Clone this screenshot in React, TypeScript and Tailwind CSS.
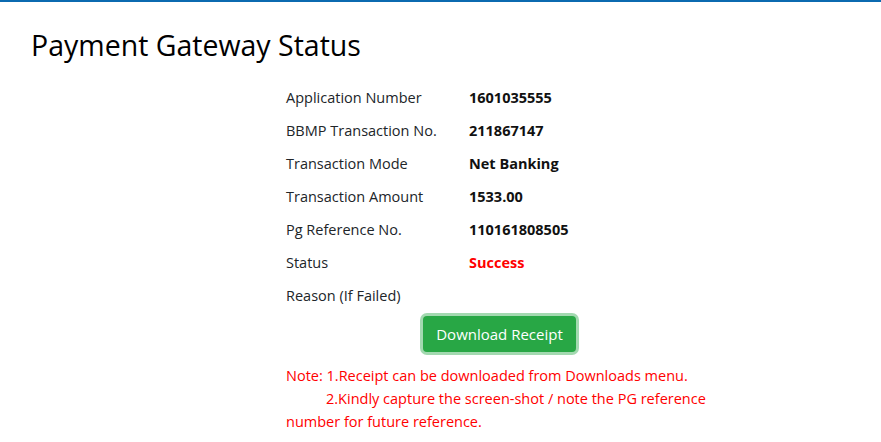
const rows: { label: string; value: string; red?: boolean }[] = [
  { label: 'Application Number', value: '1601035555' },
  { label: 'BBMP Transaction No.', value: '211867147' },
  { label: 'Transaction Mode', value: 'Net Banking' },
  { label: 'Transaction Amount', value: '1533.00' },
  { label: 'Pg Reference No.', value: '110161808505' },
  { label: 'Status', value: 'Success', red: true },
  { label: 'Reason (If Failed)', value: '' },
];

export default function App() {
  return (
    <div className="min-h-[442px] w-full bg-white border-t-2 border-[#0b6ab0] font-['Open_Sans',sans-serif] text-[#212529]">
      {/* Page heading */}
      <h1 className="pl-[31px] pt-[24px] text-[28.5px] leading-[38px] font-normal text-black">
        Payment Gateway Status
      </h1>

      <div className="ml-[286px] mt-[23px] w-[440px]">
        {/* Details */}
        <div className="flex flex-col">
          {rows.map((r) => (
            <div key={r.label} className="flex h-[33px] items-start text-[14.5px] leading-[21px]">
              <span className="w-[183px] text-[#212529]">{r.label}</span>
              <span className={r.red ? 'font-bold text-[#ff0000]' : 'font-bold text-[#111]'}>{r.value}</span>
            </div>
          ))}
        </div>

        {/* Action */}
        <div className="mt-[-2px] flex">
          <button className="ml-[137px] h-[36px] w-[153px] rounded-[4px] bg-[#28a745] text-[15px] leading-[24px] text-white shadow-[0_0_0_3px_rgba(72,180,97,0.5)]">
            Download Receipt
          </button>
        </div>

        {/* Note */}
        <div className="mt-[12px] text-[14.5px] leading-[23px] text-[#ff0000]">
          <p>Note: 1.Receipt can be downloaded from Downloads menu.</p>
          <p>
            <span className="pl-[40px]">2.Kindly capture the screen-shot / note the PG reference number for future reference.</span>
          </p>
        </div>
      </div>
    </div>
  );
}
